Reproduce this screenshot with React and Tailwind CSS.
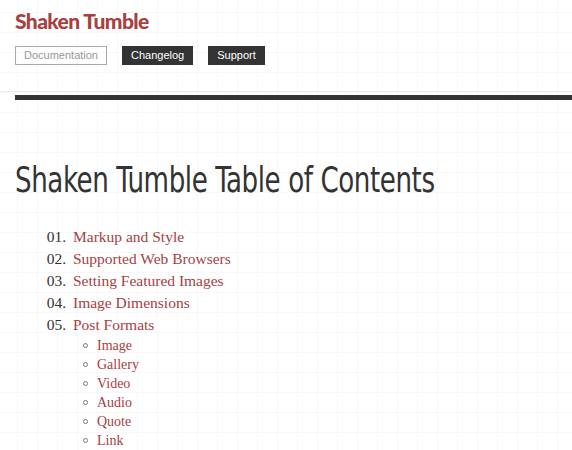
const sections = [
  'Markup and Style',
  'Supported Web Browsers',
  'Setting Featured Images',
  'Image Dimensions',
  'Post Formats',
]

const formats = ['Image', 'Gallery', 'Video', 'Audio', 'Quote', 'Link']

export default function App() {
  return (
    <div className="min-h-[450px] bg-white bg-[linear-gradient(#f8f8f8_1px,transparent_1px),linear-gradient(90deg,#f8f8f8_1px,transparent_1px)] bg-[size:20px_20px] bg-[position:17px_12px] overflow-hidden">
      {/* header */}
      <header className="pl-[15px] pt-[8px]">
        <h1 className="font-['Lato',sans-serif] font-black text-[21px] leading-[26px] text-[#a8403f] tracking-[-0.6px]">
          Shaken Tumble
        </h1>
        <nav className="flex gap-[15px] mt-[12px] font-['Liberation_Sans',Arial,sans-serif] text-[11px]">
          <a className="h-[19px] px-[8px] flex items-center border border-[#aaa] text-[#999]">Documentation</a>
          <a className="h-[19px] px-[9px] flex items-center bg-[#333] text-white">Changelog</a>
          <a className="h-[19px] px-[9px] flex items-center bg-[#333] text-white">Support</a>
        </nav>
      </header>

      <div className="mt-[26px] border-t border-[#ececec]" />
      <div className="ml-[15px] mt-[3px] h-[5px] bg-[#333]" />

      {/* content */}
      <main className="pl-[15px] pt-[58px]">
        <h2 className="font-['DejaVu_Sans_Condensed',sans-serif] text-[35px] leading-[44px] text-[#333] tracking-[-0.5px] whitespace-nowrap origin-left scale-x-[0.83]">
          Shaken Tumble Table of Contents
        </h2>

        <ol className="mt-[24px] font-['Liberation_Serif',Georgia,serif] text-[15.5px] leading-[22px]">
          {sections.map((s, i) => (
            <li key={s} className="flex">
              <span className="w-[58px] text-right pr-[7px] text-[#333]">0{i + 1}.</span>
              <a className="text-[#a8403f]">{s}</a>
            </li>
          ))}
        </ol>
        <ul className="pl-[68px] font-['Liberation_Serif',Georgia,serif] text-[14px] leading-[19px]">
          {formats.map((f) => (
            <li key={f} className="flex items-center">
              <span className="w-[5px] h-[5px] rounded-full border border-[#777] mr-[9px]" />
              <a className="text-[#a8403f]">{f}</a>
            </li>
          ))}
        </ul>
      </main>
    </div>
  )
}
